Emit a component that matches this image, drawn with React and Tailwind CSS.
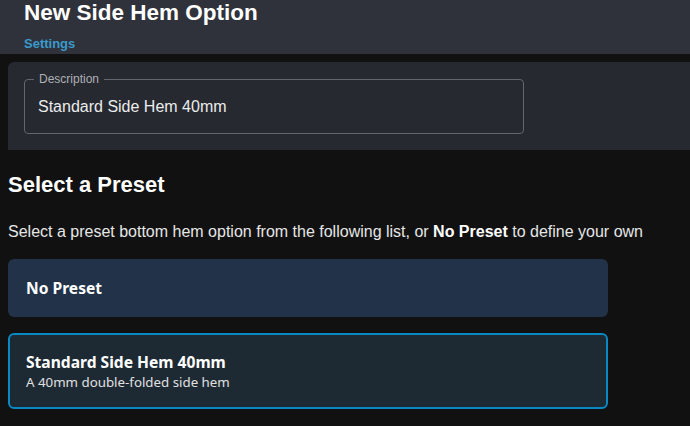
import React from "react";

const presets = [
  { id: "none", title: "No Preset", subtitle: null },
  { id: "std40", title: "Standard Side Hem 40mm", subtitle: "A 40mm double-folded side hem" },
];

export default function App() {
  const selected = "std40";

  return (
    <div className="min-h-screen w-[690px] overflow-hidden bg-[#111111] font-['Liberation_Sans',Arial,sans-serif] text-white">
      {/* Header */}
      <header className="h-[54px] bg-[#2f323b] px-6">
        <h1 className="text-[22.5px] leading-[26px] font-bold">New Side Hem Option</h1>
        <a className="mt-[10px] block text-[13px] leading-[16px] font-bold text-[#3a9bcb]">Settings</a>
      </header>

      {/* Description panel */}
      <div className="ml-2 mt-2 rounded-tl-md bg-[#262930] px-4 pt-[17px] pb-4">
        <div className="relative h-[55px] w-[500px] rounded border border-[#63666d]">
          <span className="absolute -top-[8px] left-[9px] bg-[#262930] px-[5px] text-[12px] leading-[14px] text-[#aeb0b4]">
            Description
          </span>
          <div className="flex h-full items-center pl-[13px] pt-[1px] text-[16px] text-[#ececec]">
            Standard Side Hem 40mm
          </div>
        </div>
      </div>

      {/* Presets */}
      <div className="px-2">
        <h2 className="mt-[21px] text-[22px] leading-[28px] font-bold">Select a Preset</h2>
        <p className="mt-[21px] text-[16px] leading-[24px] text-[#e6e6e6]">
          Select a preset bottom hem option from the following list, or <b className="text-white">No Preset</b> to define your own
        </p>

        <div className="mt-[15px] flex w-[600px] flex-col gap-4 font-['Noto_Sans',sans-serif]">
          {presets.map((p) => (
            <div
              key={p.id}
              className={
                p.id === selected
                  ? "rounded-md border-2 border-[#0a88c4] bg-[#1e2a33] px-4 py-4"
                  : "rounded-md border-2 border-transparent bg-[#213249] px-4 py-4"
              }
            >
              <div className="text-[15.6px] leading-[22px] font-bold">{p.title}</div>
              {p.subtitle && <div className="text-[13.3px] leading-[18px] text-[#e0e0e0]">{p.subtitle}</div>}
            </div>
          ))}
        </div>
      </div>
    </div>
  );
}
